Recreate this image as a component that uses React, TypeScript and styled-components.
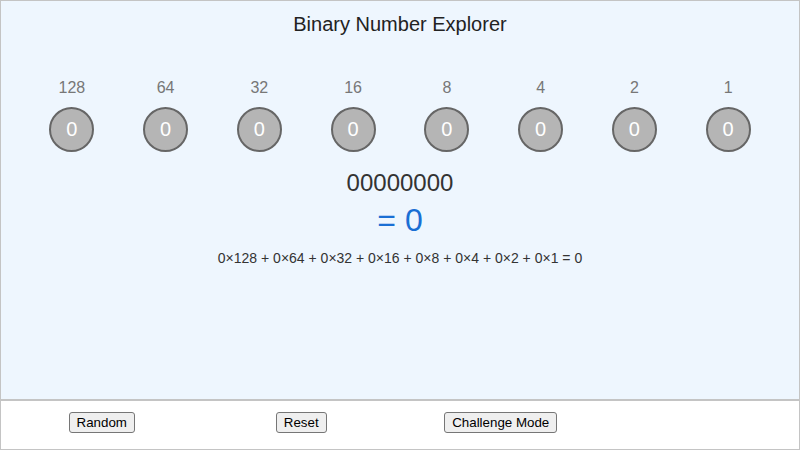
import { createGlobalStyle } from "styled-components";
import styled from "styled-components";
import { useState } from "react";

const GlobalStyle = createGlobalStyle`
  html, body {
    margin: 0;
    padding: 0;
    background: #ffffff;
  }
  body {
    font-family: "Liberation Sans", Arial, sans-serif;
  }
`;

const Frame = styled.div`
  box-sizing: border-box;
  width: 800px;
  height: 450px;
  border: 1px solid #c4c4c4;
  display: flex;
  flex-direction: column;
`;

const Stage = styled.main`
  flex: 1;
  background: #eef6fe;
  display: flex;
  flex-direction: column;
  align-items: center;
  border-bottom: 2px solid #c4c4c4;
`;

const Title = styled.h1`
  margin: 11px 0 0;
  font-size: 20px;
  line-height: 24px;
  font-weight: normal;
  color: #222;
`;

const BitRow = styled.div`
  margin-top: 43px;
  width: 750px;
  display: grid;
  grid-template-columns: repeat(8, 1fr);
`;

const BitColumn = styled.div`
  display: flex;
  flex-direction: column;
  align-items: center;
  gap: 10px;
`;

const Weight = styled.span`
  font-size: 16px;
  line-height: 18px;
  color: #777;
`;

const Bit = styled.button<{ $on: boolean }>`
  box-sizing: border-box;
  width: 45px;
  height: 45px;
  border-radius: 50%;
  border: 2px solid #666;
  background: ${(p) => (p.$on ? "#1a6fd4" : "#b5b5b5")};
  color: #fff;
  font-family: inherit;
  font-size: 20px;
  padding: 0;
  cursor: pointer;
`;

const BinaryString = styled.div`
  margin-top: 17px;
  font-size: 24px;
  line-height: 28px;
  color: #333;
`;

const Decimal = styled.div`
  margin-top: 5px;
  font-size: 32px;
  line-height: 36px;
  color: #1a6fd4;
`;

const Formula = styled.div`
  margin-top: 11px;
  font-size: 14px;
  line-height: 18px;
  color: #333;
`;

const Controls = styled.footer`
  box-sizing: border-box;
  height: 48px;
  padding-top: 11px;
  display: grid;
  grid-template-columns: repeat(4, 1fr);
  align-items: start;
  justify-items: center;
  background: #fff;
`;

const Button = styled.button`
  font-family: "Liberation Sans", Arial, sans-serif;
  font-size: 13.333px;
  line-height: 15px;
  padding: 2px 7px;
  margin-left: 2px;
  color: #000;
  background: #efefef;
  border: 1px solid #767676;
  border-radius: 3px;
  cursor: pointer;
`;

const weights = [128, 64, 32, 16, 8, 4, 2, 1];

const App = () => {
  const [bits, setBits] = useState<number[]>(Array(8).fill(0));

  const value = bits.reduce((sum, b, i) => sum + b * weights[i], 0);
  const formula = bits.map((b, i) => `${b}×${weights[i]}`).join(" + ") + ` = ${value}`;

  const toggle = (i: number) => {
    setBits((prev) => prev.map((b, j) => (j === i ? 1 - b : b)));
  };

  const randomize = () => setBits(weights.map(() => (Math.random() < 0.5 ? 0 : 1)));

  return (
    <>
      <GlobalStyle />
      <Frame>
        <Stage>
          <Title>Binary Number Explorer</Title>
          <BitRow>
            {weights.map((w, i) => (
              <BitColumn key={w}>
                <Weight>{w}</Weight>
                <Bit $on={bits[i] === 1} onClick={() => toggle(i)}>
                  {bits[i]}
                </Bit>
              </BitColumn>
            ))}
          </BitRow>
          <BinaryString>{bits.join("")}</BinaryString>
          <Decimal>= {value}</Decimal>
          <Formula>{formula}</Formula>
        </Stage>
        <Controls>
          <Button onClick={randomize}>Random</Button>
          <Button onClick={() => setBits(Array(8).fill(0))}>Reset</Button>
          <Button>Challenge Mode</Button>
          <span />
        </Controls>
      </Frame>
    </>
  );
};

export default App;
